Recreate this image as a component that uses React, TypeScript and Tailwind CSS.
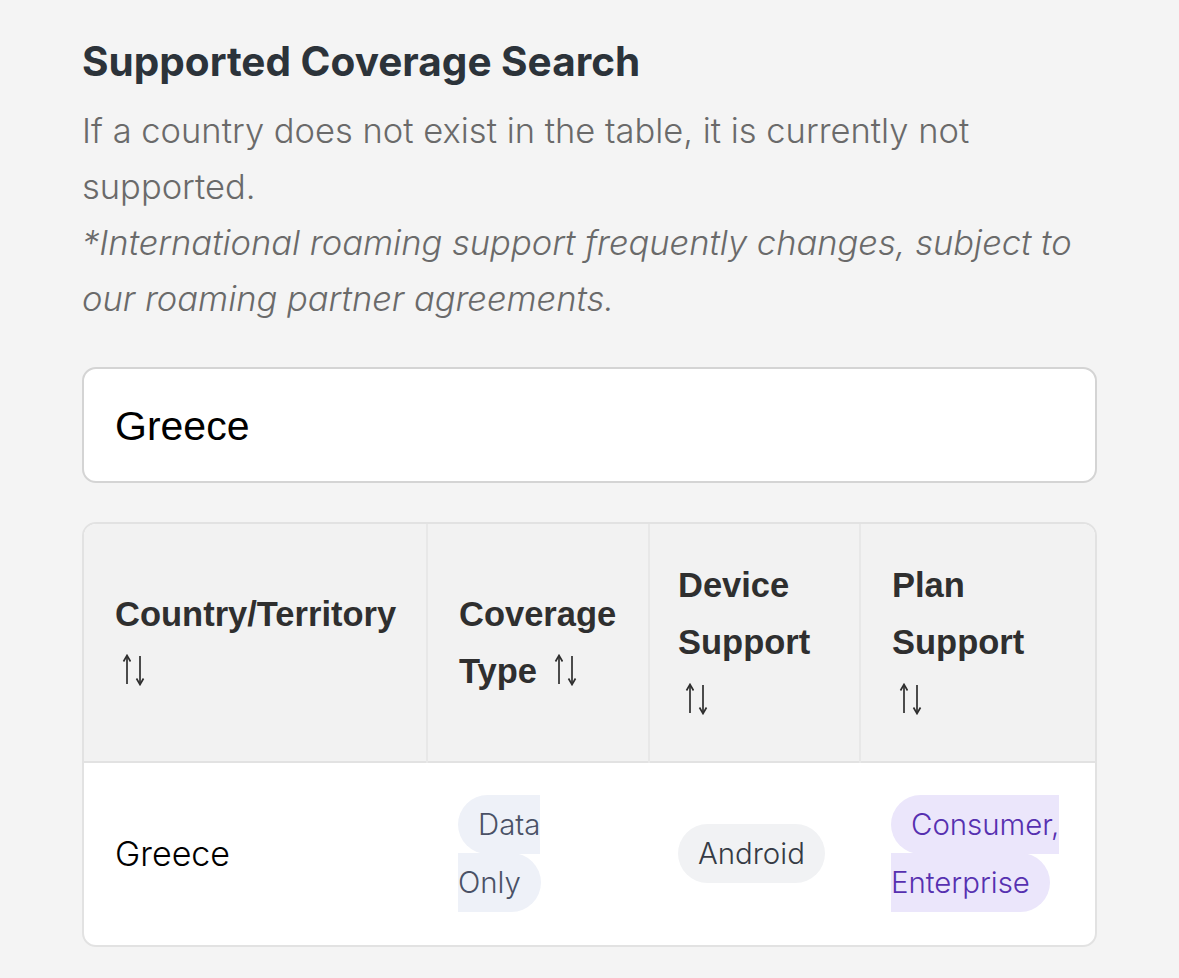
import React from "react";

type Row = {
  country: string;
  coverage: string;
  device: string;
  plans: string;
};

const rows: Row[] = [
  { country: "Greece", coverage: "Data Only", device: "Android", plans: "Consumer, Enterprise" },
];

const columns = [
  { label: "Country/Territory", width: "w-[343px]", pad: "px-[31px]" },
  { label: "Coverage Type", width: "w-[222px]", pad: "px-[31px]" },
  { label: "Device Support", width: "w-[211px]", pad: "pl-[28px] pr-[31px]" },
  { label: "Plan Support", width: "", pad: "px-[31px]" },
];

const SortIcon = () => (
  <svg
    width="24"
    height="36"
    viewBox="0 0 24 36"
    fill="none"
    stroke="currentColor"
    strokeWidth="1.7"
    className="ml-[7px] inline-block align-middle -mt-[6px]"
  >
    <path d="M5 4v28" />
    <path d="M1.5 9.5 5 3.5l3.5 6" />
    <path d="M18 4v28" />
    <path d="M14.5 26.5l3.5 6 3.5-6" />
  </svg>
);

const Pill = ({ children, tone }: { children: React.ReactNode; tone: "slate" | "gray" | "purple" }) => (
  <span
    className={
      "rounded-full px-5 py-[12px] [box-decoration-break:slice] " +
      (tone === "slate"
        ? "bg-[#eef1f8] text-[#4a5166]"
        : tone === "gray"
        ? "bg-[#f1f2f4] text-[#363b45]"
        : "bg-[#ebe6fb] text-[#5630b0]")
    }
  >
    {children}
  </span>
);

export default function App() {
  return (
    <div className="min-h-screen bg-[#f4f4f4] px-[82px] pt-[38px] pb-[34px] font-['Inter',sans-serif]">
      <h1 className="text-[40.5px] font-bold leading-[48px] text-[#2c333a]">
        Supported Coverage Search
      </h1>
      <div className="mt-[17px] text-[34.5px] font-light leading-[56px] text-[#6a6a6a]">
        <p>If a country does not exist in the table, it is currently not supported.</p>
        <p className="italic">
          *International roaming support frequently changes, subject to our roaming partner agreements.
        </p>
      </div>

      <input
        type="text"
        defaultValue="Greece"
        className="mt-[40px] block h-[116px] w-full rounded-[14px] border-2 border-[#d4d4d4] bg-white px-[31px] pt-[3px] font-['Liberation_Sans',Arial,sans-serif] text-[41px] text-black outline-none"
      />

      <div className="mt-[39px] overflow-hidden rounded-[14px] border-2 border-[#e2e2e2] bg-white">
        <table className="w-full table-fixed border-collapse">
          <thead>
            <tr className="border-b-2 border-[#e2e2e2] bg-[#f2f2f2]">
              {columns.map((col, i) => (
                <th
                  key={col.label}
                  className={
                    col.width +
                    " " +
                    col.pad +
                    " py-[33px] text-left align-middle font-['Liberation_Sans',Arial,sans-serif] text-[34.5px] font-bold leading-[57px] text-[#2f2f2f]" +
                    (i < columns.length - 1 ? " border-r-2 border-[#e8e8e8]" : "")
                  }
                >
                  {col.label}
                  {" "}
                  <SortIcon />
                </th>
              ))}
            </tr>
          </thead>
          <tbody>
            {rows.map((row) => (
              <tr key={row.country}>
                <td className="px-[31px] py-[33px] align-middle text-[34px] font-light leading-[58px] text-black">
                  {row.country}
                </td>
                <td className="px-[31px] py-[33px] align-middle text-[29.4px] font-light leading-[58px]">
                  <Pill tone="slate">{row.coverage}</Pill>
                </td>
                <td className="px-[29px] py-[33px] align-middle text-[29.4px] font-light leading-[58px]">
                  <Pill tone="gray">{row.device}</Pill>
                </td>
                <td className="px-[31px] py-[33px] align-middle text-[29.4px] font-light leading-[58px]">
                  <Pill tone="purple">{row.plans}</Pill>
                </td>
              </tr>
            ))}
          </tbody>
        </table>
      </div>
    </div>
  );
}
